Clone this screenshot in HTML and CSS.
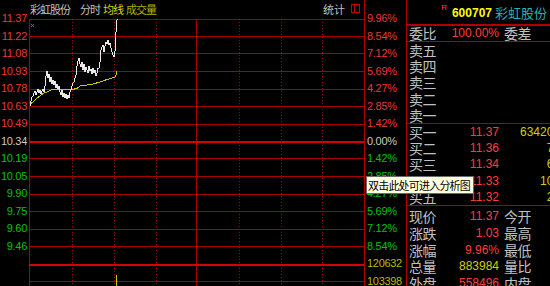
FILE: index.html
```html
<!DOCTYPE html>
<html lang="zh-CN">
<head>
<meta charset="utf-8">
<title>彩虹股份 分时</title>
<link rel="stylesheet" href="styles.css">
</head>
<body>
<div class="screen">
  <section class="chart-pane">
    <header class="chart-head">
      <span class="name">彩虹股份</span>
      <span class="tab">分时</span>
      <span class="tab tab-avg">均线</span>
      <span class="tab tab-vol">成交量</span>
      <span class="stat">统计</span>
      <svg class="win-icon" width="10" height="9" viewBox="0 0 10 9">
        <rect x="0.5" y="0.5" width="8" height="8" fill="none" stroke="#c00000"/>
        <line x1="3.5" y1="0" x2="3.5" y2="9" stroke="#c00000"/>
      </svg>
    </header>
    <div class="chart-body">
      <div class="axis axis-left">
        <span class="up">11.37</span>
        <span class="up">11.22</span>
        <span class="up">11.08</span>
        <span class="up">10.93</span>
        <span class="up">10.78</span>
        <span class="up">10.63</span>
        <span class="up">10.49</span>
        <span class="flat">10.34</span>
        <span class="down">10.19</span>
        <span class="down">10.05</span>
        <span class="down">9.90</span>
        <span class="down">9.75</span>
        <span class="down">9.60</span>
        <span class="down">9.46</span>
      </div>
      <svg class="plot" width="335" height="267" viewBox="0 0 335 267" shape-rendering="crispEdges">
        <g fill="#a80000">
          <rect x="0" y="0" width="335" height="1"/>
          <rect x="0" y="17" width="335" height="1"/>
          <rect x="0" y="34" width="335" height="1"/>
          <rect x="0" y="52" width="335" height="1"/>
          <rect x="0" y="70" width="335" height="1"/>
          <rect x="0" y="87" width="335" height="1"/>
          <rect x="0" y="105" width="335" height="1"/>
          <rect x="0" y="139" width="335" height="1"/>
          <rect x="0" y="157" width="335" height="1"/>
          <rect x="0" y="175" width="335" height="1"/>
          <rect x="0" y="192" width="335" height="1"/>
          <rect x="0" y="210" width="335" height="1"/>
          <rect x="0" y="227" width="335" height="1"/>
          <rect x="0" y="262" width="335" height="1"/>
          <rect x="0" y="0" width="1" height="267"/>
          <rect x="167" y="0" width="1" height="267"/>
        </g>
        <g fill="#d80000">
          <rect x="0" y="122" width="335" height="2"/>
          <rect x="0" y="245" width="335" height="2"/>
        </g>
        <g stroke="#a00000" stroke-dasharray="1 2">
          <line x1="43.5" y1="0" x2="43.5" y2="267"/>
          <line x1="85.5" y1="0" x2="85.5" y2="267"/>
          <line x1="127.5" y1="0" x2="127.5" y2="267"/>
          <line x1="210.5" y1="0" x2="210.5" y2="267"/>
          <line x1="252.5" y1="0" x2="252.5" y2="267"/>
          <line x1="293.5" y1="0" x2="293.5" y2="267"/>
        </g>
        <g fill="none">
          <polyline stroke="#c8c800" stroke-width="1" points="1,85 4,83 7,80 11,77 15,74 18,73 22,71 27,70.5 37,70.5 43,70.5 48,69.5 51,67 58,66 64,65 71,63 78,60.5 83,59 86,58 87,56 88,52"/>
          <polyline stroke="#e8e8e8" stroke-width="1" points="1,87 2,82 3,78 4,77 5,74 6,72 7,76 8,73 9,70 10,74 11,71 12,75 13,72 14,70 15,73 16,67 17,57 18,52 19,59 20,55 21,63 22,58 23,65 24,61 25,66 26,62 27,69 28,65 29,70 30,67 31,73 32,76 33,71 34,78 35,74 36,79 37,75 38,80 39,76 40,79 41,73 42,71 43,67 44,64 45,63 46,59 47,56 48,47 49,42 50,39 51,45 52,48 53,43 54,51 55,45 56,53 57,48 58,51 59,54 60,47 61,52 62,50 63,55 64,49 65,54 66,51 67,57 68,54 69,49 70,49 71,43 72,31 73,28 74,26 75,33 76,27 77,23 78,25 79,21 80,26 81,24 82,29 83,33 84,36 85,38 86,32 87,13 88,1 88.5,0"/>
          <path d="M2 5 L5 8 M5 5 L2 8" stroke="#ff00ff" stroke-width="1"/>
        </g>
        <rect x="87" y="256" width="1" height="11" fill="#c8c800"/>
      </svg>
    </div>
  </section>

  <div class="axis axis-right">
    <span class="up">9.96%</span>
    <span class="up">8.54%</span>
    <span class="up">7.12%</span>
    <span class="up">5.69%</span>
    <span class="up">4.27%</span>
    <span class="up">2.85%</span>
    <span class="up">1.42%</span>
    <span class="flat">0.00%</span>
    <span class="down">1.42%</span>
    <span class="down">2.85%</span>
    <span class="down">4.27%</span>
    <span class="down">5.69%</span>
    <span class="down">7.12%</span>
    <span class="down">8.54%</span>
    <span class="vol">120632</span>
    <span class="vol">103398</span>
  </div>

  <aside class="quote">
    <div class="q-head">
      <span class="q-flag">R</span>
      <span class="q-code">600707</span>
      <span class="q-name">彩虹股份</span>
    </div>
    <div class="q-ratio row">
      <div class="lv"><span class="lbl">委比</span><span class="num red">100.00%</span></div>
      <span class="c3 lbl">委差</span>
    </div>
    <div class="q-block">
      <div class="row book"><div class="lv"><span class="lbl">卖五</span></div></div>
      <div class="row book"><div class="lv"><span class="lbl">卖四</span></div></div>
      <div class="row book"><div class="lv"><span class="lbl">卖三</span></div></div>
      <div class="row book"><div class="lv"><span class="lbl">卖二</span></div></div>
      <div class="row book"><div class="lv"><span class="lbl">卖一</span></div></div>
    </div>
    <div class="q-block">
      <div class="row book"><div class="lv"><span class="lbl">买一</span><span class="num red">11.37</span></div><span class="c3 num yel amt">634206</span></div>
      <div class="row book"><div class="lv"><span class="lbl">买二</span><span class="num red">11.36</span></div><span class="c3 num yel amt">71</span></div>
      <div class="row book"><div class="lv"><span class="lbl">买三</span><span class="num red">11.34</span></div><span class="c3 num yel amt">60</span></div>
      <div class="row book"><div class="lv"><span class="lbl">买四</span><span class="num red">11.33</span></div><span class="c3 num yel amt">100</span></div>
      <div class="row book"><div class="lv"><span class="lbl">买五</span><span class="num red">11.32</span></div><span class="c3 num yel amt">22</span></div>
    </div>
    <div class="q-stats">
      <div class="row stat-row"><div class="lv"><span class="lbl">现价</span><span class="num red">11.37</span></div><span class="c3 lbl">今开</span></div>
      <div class="row stat-row"><div class="lv"><span class="lbl">涨跌</span><span class="num red">1.03</span></div><span class="c3 lbl">最高</span></div>
      <div class="row stat-row"><div class="lv"><span class="lbl">涨幅</span><span class="num red">9.96%</span></div><span class="c3 lbl">最低</span></div>
      <div class="row stat-row"><div class="lv"><span class="lbl">总量</span><span class="num yel">883984</span></div><span class="c3 lbl">量比</span></div>
      <div class="row stat-row"><div class="lv"><span class="lbl">外盘</span><span class="num red">558496</span></div><span class="c3 lbl">内盘</span></div>
    </div>
  </aside>

  <div class="tooltip">双击此处可进入分析图</div>
</div>
</body>
</html>
```

FILE: styles.css
```css
* { box-sizing: border-box; }

html, body {
  margin: 0;
  padding: 0;
  background: #000;
}

body {
  width: 550px;
  height: 286px;
  overflow: hidden;
  font-family: "Liberation Sans", Arial, sans-serif;
}

.screen {
  position: relative;
  display: flex;
  width: 550px;
  height: 286px;
  overflow: hidden;
  background: #000;
}

/* ---------- chart pane ---------- */
.chart-pane {
  flex: none;
  width: 365px;
  border-right: 1px solid #b00000;
  display: flex;
  flex-direction: column;
}

.chart-head {
  flex: none;
  height: 19px;
  display: flex;
  align-items: center;
  padding-left: 30px;
  padding-right: 3px;
  font-family: "Noto Sans CJK SC", sans-serif;
  font-size: 11px;
  line-height: 19px;
  letter-spacing: -1px;
  color: #c0c0c0;
  white-space: nowrap;
}

.chart-head .name { margin-right: 10px; }
.chart-head .tab { margin-right: 3px; }
.chart-head .tab-avg { color: #d8d800; }
.chart-head .tab-vol { color: #b0b000; }
.chart-head .stat { margin-left: auto; margin-right: 6px; letter-spacing: 0; }
.win-icon { display: block; margin-bottom: 3px; }

.chart-body {
  flex: 1;
  display: flex;
}

.plot {
  display: block;
  flex: none;
}

/* ---------- axes ---------- */
.axis {
  display: flex;
  flex-direction: column;
  font-family: "Liberation Sans", Arial, sans-serif;
  font-size: 11px;
  letter-spacing: -0.3px;
}

.axis span {
  display: block;
  height: 17.5px;
  line-height: 17.5px;
  white-space: nowrap;
}

.axis-left {
  flex: none;
  width: 29px;
  margin-top: -9px;
  padding-right: 2px;
  align-items: flex-end;
}

.axis-right {
  flex: none;
  width: 41px;
  padding-top: 10px;
  padding-left: 2px;
  align-items: flex-start;
}

.up { color: #e83838; }
.flat { color: #c8c8c8; }
.down { color: #00c400; }
.vol { color: #b8b800; }

/* ---------- quote panel ---------- */
.quote {
  flex: 1;
  min-width: 0;
  border-left: 1px solid #b00000;
  display: flex;
  flex-direction: column;
  color: #c0c0c0;
  font-family: "Noto Sans CJK SC", sans-serif;
}

.q-head {
  flex: none;
  height: 26px;
  border-bottom: 2px solid #b00000;
  display: flex;
  justify-content: flex-end;
  align-items: center;
  padding-right: 3px;
  white-space: nowrap;
}

.q-flag {
  align-self: flex-start;
  margin-top: 3px;
  font-family: "Liberation Sans", Arial, sans-serif;
  font-size: 8px;
  line-height: 10px;
  color: #ff4040;
}

.q-code {
  margin-left: 5px;
  font-family: "Liberation Sans", Arial, sans-serif;
  font-weight: bold;
  font-size: 12px;
  color: #ffff00;
  padding-top: 2px;
}

.q-name {
  margin-left: 3px;
  font-size: 13px;
  color: #20b4b4;
}

.row {
  display: flex;
  padding-left: 2px;
  white-space: nowrap;
  font-size: 14px;
}

.lv {
  flex: none;
  width: 90px;
  display: flex;
  justify-content: space-between;
}

.lbl {
  letter-spacing: -0.5px;
  color: #c0c0c0;
}

.c3 { flex: none; margin-left: 5px; }

.num {
  font-family: "Liberation Sans", Arial, sans-serif;
  font-size: 12px;
}

.red { color: #ff3c3c; }
.yel { color: #d0d000; }

.amt {
  width: 56px;
  text-align: right;
}

.q-ratio {
  flex: none;
  height: 16px;
  line-height: 15px;
  border-bottom: 1px solid #b00000;
}

.q-block {
  flex: none;
  height: 82px;
  border-bottom: 1px solid #b00000;
  display: flex;
  flex-direction: column;
}

.book {
  height: 16.2px;
  line-height: 16.2px;
}

.q-stats {
  flex: 1;
  padding-top: 2px;
  display: flex;
  flex-direction: column;
}

.stat-row {
  height: 16.8px;
  line-height: 16.8px;
}

/* ---------- tooltip ---------- */
.tooltip {
  position: absolute;
  left: 366px;
  top: 176px;
  width: 108px;
  height: 18px;
  padding-left: 1px;
  background: #ffffe1;
  border: 1px solid #6a6a6a;
  color: #000;
  font-family: "Noto Sans CJK SC", sans-serif;
  font-size: 11px;
  line-height: 16px;
  letter-spacing: -0.8px;
  white-space: nowrap;
}
```
